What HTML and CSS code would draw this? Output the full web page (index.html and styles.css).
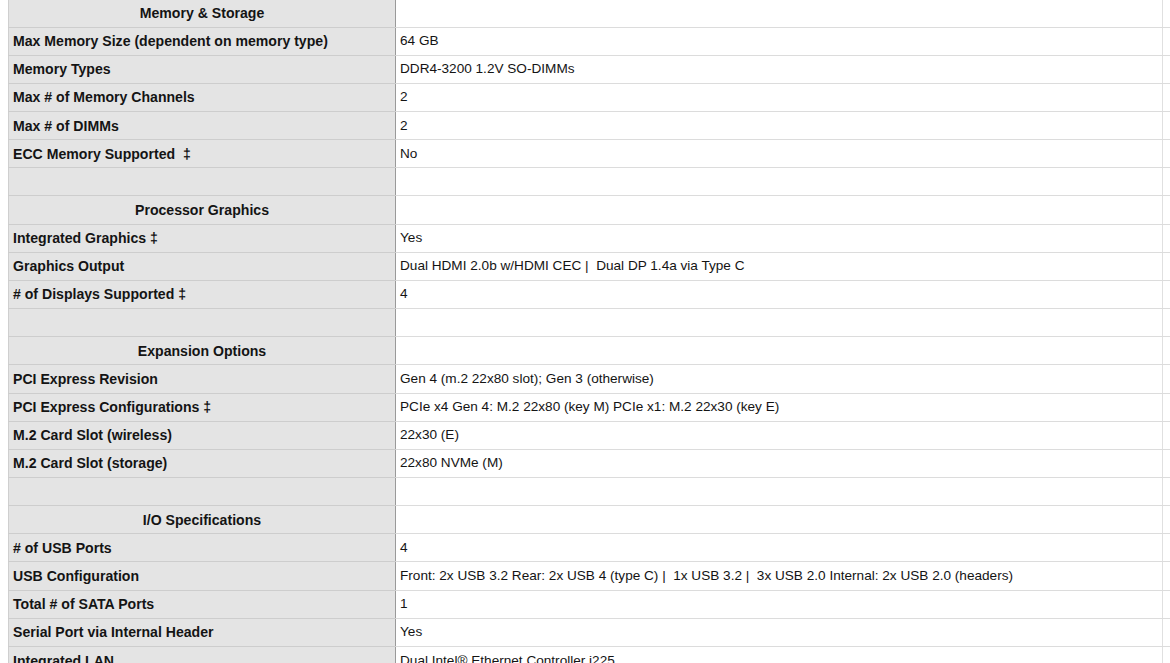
FILE: index.html
```html
<!DOCTYPE html>
<html>
<head>
<meta charset="utf-8">
<link rel="stylesheet" href="styles.css">
</head>
<body>
<table class="spec">
<tbody>
<tr class="head"><th class="k c">Memory &amp; Storage</th><td class="v"></td><td class="x"></td></tr>
<tr><th class="k">Max Memory Size (dependent on memory type)</th><td class="v">64 GB</td><td class="x"></td></tr>
<tr><th class="k">Memory Types</th><td class="v">DDR4-3200 1.2V SO-DIMMs</td><td class="x"></td></tr>
<tr><th class="k">Max # of Memory Channels</th><td class="v">2</td><td class="x"></td></tr>
<tr><th class="k">Max # of DIMMs</th><td class="v">2</td><td class="x"></td></tr>
<tr><th class="k">ECC Memory Supported &nbsp;‡</th><td class="v">No</td><td class="x"></td></tr>
<tr><th class="k"></th><td class="v"></td><td class="x"></td></tr>
<tr><th class="k c">Processor Graphics</th><td class="v"></td><td class="x"></td></tr>
<tr><th class="k">Integrated Graphics ‡</th><td class="v">Yes</td><td class="x"></td></tr>
<tr><th class="k">Graphics Output</th><td class="v">Dual HDMI 2.0b w/HDMI CEC |&nbsp; Dual DP 1.4a via Type C</td><td class="x"></td></tr>
<tr><th class="k"># of Displays Supported ‡</th><td class="v">4</td><td class="x"></td></tr>
<tr><th class="k"></th><td class="v"></td><td class="x"></td></tr>
<tr><th class="k c">Expansion Options</th><td class="v"></td><td class="x"></td></tr>
<tr><th class="k">PCI Express Revision</th><td class="v">Gen 4 (m.2 22x80 slot); Gen 3 (otherwise)</td><td class="x"></td></tr>
<tr><th class="k">PCI Express Configurations ‡</th><td class="v">PCIe x4 Gen 4: M.2 22x80 (key M) PCIe x1: M.2 22x30 (key E)</td><td class="x"></td></tr>
<tr><th class="k">M.2 Card Slot (wireless)</th><td class="v">22x30 (E)</td><td class="x"></td></tr>
<tr><th class="k">M.2 Card Slot (storage)</th><td class="v">22x80 NVMe (M)</td><td class="x"></td></tr>
<tr><th class="k"></th><td class="v"></td><td class="x"></td></tr>
<tr><th class="k c">I/O Specifications</th><td class="v"></td><td class="x"></td></tr>
<tr><th class="k"># of USB Ports</th><td class="v">4</td><td class="x"></td></tr>
<tr><th class="k">USB Configuration</th><td class="v">Front: 2x USB 3.2 Rear: 2x USB 4 (type C) |&nbsp; 1x USB 3.2 |&nbsp; 3x USB 2.0 Internal: 2x USB 2.0 (headers)</td><td class="x"></td></tr>
<tr><th class="k">Total # of SATA Ports</th><td class="v">1</td><td class="x"></td></tr>
<tr><th class="k">Serial Port via Internal Header</th><td class="v">Yes</td><td class="x"></td></tr>
<tr><th class="k">Integrated LAN</th><td class="v">Dual Intel® Ethernet Controller i225</td><td class="x"></td></tr>
</tbody>
</table>
</body>
</html>
```
FILE: styles.css
```css
html, body {
  margin: 0;
  padding: 0;
  background: #ffffff;
  overflow: hidden;
}
body {
  font-family: "Liberation Sans", Arial, sans-serif;
  font-size: 13.6px;
  color: #141414;
}
.spec {
  border-collapse: collapse;
  margin: 0 0 0 8px;
  table-layout: fixed;
  width: 1170px;
}
.spec tr {
  height: 28.16px;
}
.spec tr.head {
  height: 27px;
}
.spec th, .spec td {
  padding: 0 0 0 4px;
  border-bottom: 1px solid #dcdcdc;
  text-align: left;
  vertical-align: middle;
  white-space: nowrap;
  line-height: 16px;
}
.spec .k {
  width: 386px;
  background: #e4e4e4;
  font-weight: bold;
  font-size: 14.1px;
  border-left: 1px solid #cfcfcf;
  border-right: 1px solid #9a9a9a;
  border-bottom-color: #cdcdcd;
  padding-left: 4px;
}
.spec .k.c {
  text-align: center;
  padding-left: 0;
}
.spec .v {
  width: 762px;
  background: #ffffff;
  border-right: 1px solid #e0e0e0;
  padding-left: 4px;
}
.spec .x {
  background: #ffffff;
}
```
